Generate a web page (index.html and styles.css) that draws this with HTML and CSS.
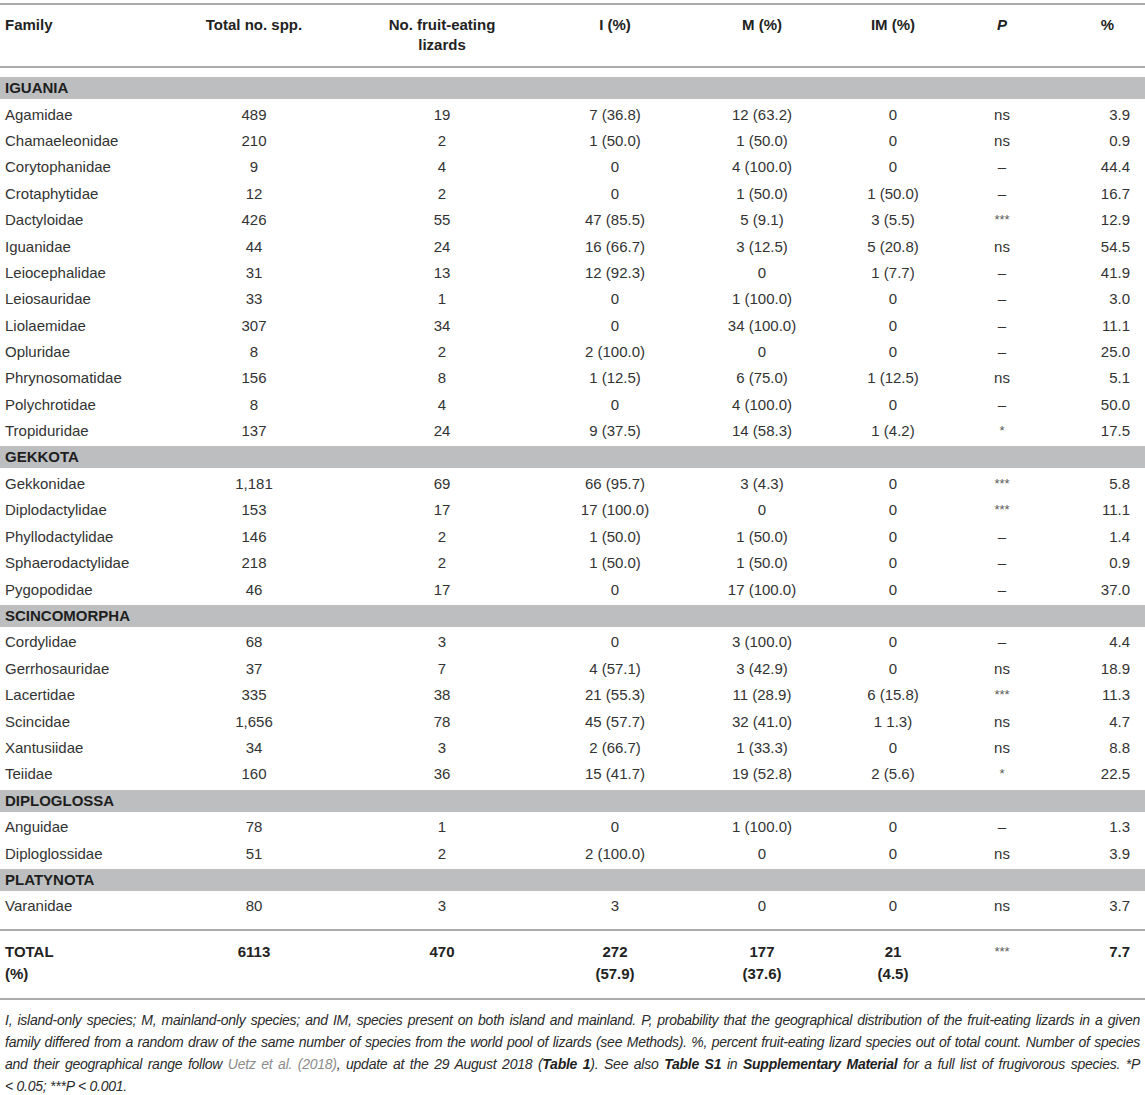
FILE: index.html
```html
<!DOCTYPE html>
<html lang="en">
<head>
<meta charset="utf-8">
<title>Fruit-eating lizards by family</title>
<link rel="stylesheet" href="styles.css">
</head>
<body>
<table class="tbl">
  <colgroup>
    <col class="c1"><col class="c2"><col class="c3"><col class="c4"><col class="c5"><col class="c6"><col class="c7"><col class="c8">
  </colgroup>
  <thead>
    <tr>
      <th class="fam">Family</th>
      <th>Total no. spp.</th>
      <th>No. fruit-eating<br>lizards</th>
      <th>I (%)</th>
      <th>M (%)</th>
      <th>IM (%)</th>
      <th><i>P</i></th>
      <th class="pct">%</th>
    </tr>
  </thead>
  <tbody>
    <tr class="band first"><td colspan="8"><div class="fill">IGUANIA</div></td></tr>
    <tr><td class="fam">Agamidae</td><td>489</td><td>19</td><td>7 (36.8)</td><td>12 (63.2)</td><td>0</td><td>ns</td><td class="pct">3.9</td></tr>
    <tr><td class="fam">Chamaeleonidae</td><td>210</td><td>2</td><td>1 (50.0)</td><td>1 (50.0)</td><td>0</td><td>ns</td><td class="pct">0.9</td></tr>
    <tr><td class="fam">Corytophanidae</td><td>9</td><td>4</td><td>0</td><td>4 (100.0)</td><td>0</td><td>–</td><td class="pct">44.4</td></tr>
    <tr><td class="fam">Crotaphytidae</td><td>12</td><td>2</td><td>0</td><td>1 (50.0)</td><td>1 (50.0)</td><td>–</td><td class="pct">16.7</td></tr>
    <tr><td class="fam">Dactyloidae</td><td>426</td><td>55</td><td>47 (85.5)</td><td>5 (9.1)</td><td>3 (5.5)</td><td class="ast">***</td><td class="pct">12.9</td></tr>
    <tr><td class="fam">Iguanidae</td><td>44</td><td>24</td><td>16 (66.7)</td><td>3 (12.5)</td><td>5 (20.8)</td><td>ns</td><td class="pct">54.5</td></tr>
    <tr><td class="fam">Leiocephalidae</td><td>31</td><td>13</td><td>12 (92.3)</td><td>0</td><td>1 (7.7)</td><td>–</td><td class="pct">41.9</td></tr>
    <tr><td class="fam">Leiosauridae</td><td>33</td><td>1</td><td>0</td><td>1 (100.0)</td><td>0</td><td>–</td><td class="pct">3.0</td></tr>
    <tr><td class="fam">Liolaemidae</td><td>307</td><td>34</td><td>0</td><td>34 (100.0)</td><td>0</td><td>–</td><td class="pct">11.1</td></tr>
    <tr><td class="fam">Opluridae</td><td>8</td><td>2</td><td>2 (100.0)</td><td>0</td><td>0</td><td>–</td><td class="pct">25.0</td></tr>
    <tr><td class="fam">Phrynosomatidae</td><td>156</td><td>8</td><td>1 (12.5)</td><td>6 (75.0)</td><td>1 (12.5)</td><td>ns</td><td class="pct">5.1</td></tr>
    <tr><td class="fam">Polychrotidae</td><td>8</td><td>4</td><td>0</td><td>4 (100.0)</td><td>0</td><td>–</td><td class="pct">50.0</td></tr>
    <tr><td class="fam">Tropiduridae</td><td>137</td><td>24</td><td>9 (37.5)</td><td>14 (58.3)</td><td>1 (4.2)</td><td class="ast">*</td><td class="pct">17.5</td></tr>
    <tr class="band"><td colspan="8"><div class="fill">GEKKOTA</div></td></tr>
    <tr><td class="fam">Gekkonidae</td><td>1,181</td><td>69</td><td>66 (95.7)</td><td>3 (4.3)</td><td>0</td><td class="ast">***</td><td class="pct">5.8</td></tr>
    <tr><td class="fam">Diplodactylidae</td><td>153</td><td>17</td><td>17 (100.0)</td><td>0</td><td>0</td><td class="ast">***</td><td class="pct">11.1</td></tr>
    <tr><td class="fam">Phyllodactylidae</td><td>146</td><td>2</td><td>1 (50.0)</td><td>1 (50.0)</td><td>0</td><td>–</td><td class="pct">1.4</td></tr>
    <tr><td class="fam">Sphaerodactylidae</td><td>218</td><td>2</td><td>1 (50.0)</td><td>1 (50.0)</td><td>0</td><td>–</td><td class="pct">0.9</td></tr>
    <tr><td class="fam">Pygopodidae</td><td>46</td><td>17</td><td>0</td><td>17 (100.0)</td><td>0</td><td>–</td><td class="pct">37.0</td></tr>
    <tr class="band"><td colspan="8"><div class="fill">SCINCOMORPHA</div></td></tr>
    <tr><td class="fam">Cordylidae</td><td>68</td><td>3</td><td>0</td><td>3 (100.0)</td><td>0</td><td>–</td><td class="pct">4.4</td></tr>
    <tr><td class="fam">Gerrhosauridae</td><td>37</td><td>7</td><td>4 (57.1)</td><td>3 (42.9)</td><td>0</td><td>ns</td><td class="pct">18.9</td></tr>
    <tr><td class="fam">Lacertidae</td><td>335</td><td>38</td><td>21 (55.3)</td><td>11 (28.9)</td><td>6 (15.8)</td><td class="ast">***</td><td class="pct">11.3</td></tr>
    <tr><td class="fam">Scincidae</td><td>1,656</td><td>78</td><td>45 (57.7)</td><td>32 (41.0)</td><td>1 1.3)</td><td>ns</td><td class="pct">4.7</td></tr>
    <tr><td class="fam">Xantusiidae</td><td>34</td><td>3</td><td>2 (66.7)</td><td>1 (33.3)</td><td>0</td><td>ns</td><td class="pct">8.8</td></tr>
    <tr><td class="fam">Teiidae</td><td>160</td><td>36</td><td>15 (41.7)</td><td>19 (52.8)</td><td>2 (5.6)</td><td class="ast">*</td><td class="pct">22.5</td></tr>
    <tr class="band"><td colspan="8"><div class="fill">DIPLOGLOSSA</div></td></tr>
    <tr><td class="fam">Anguidae</td><td>78</td><td>1</td><td>0</td><td>1 (100.0)</td><td>0</td><td>–</td><td class="pct">1.3</td></tr>
    <tr><td class="fam">Diploglossidae</td><td>51</td><td>2</td><td>2 (100.0)</td><td>0</td><td>0</td><td>ns</td><td class="pct">3.9</td></tr>
    <tr class="band"><td colspan="8"><div class="fill">PLATYNOTA</div></td></tr>
    <tr><td class="fam">Varanidae</td><td>80</td><td>3</td><td>3</td><td>0</td><td>0</td><td>ns</td><td class="pct">3.7</td></tr>
    <tr class="gap"><td colspan="8"></td></tr>
    <tr class="tot1"><td class="fam">TOTAL</td><td>6113</td><td>470</td><td>272</td><td>177</td><td>21</td><td class="ast">***</td><td class="pct">7.7</td></tr>
    <tr class="tot2"><td class="fam">(%)</td><td></td><td></td><td>(57.9)</td><td>(37.6)</td><td>(4.5)</td><td></td><td class="pct"></td></tr>
  </tbody>
</table>
<p class="note">
<span class="ln">I, island-only species; M, mainland-only species; and IM, species present on both island and mainland. P, probability that the geographical distribution of the fruit-eating lizards in a given</span>
<span class="ln">family differed from a random draw of the same number of species from the world pool of lizards (see Methods). %, percent fruit-eating lizard species out of total count. Number of species</span>
<span class="ln">and their geographical range follow <a class="ref" href="#">Uetz et al. (2018)</a>, update at the 29 August 2018 (<b>Table 1</b>). See also <b>Table S1</b> in <b>Supplementary Material</b> for a full list of frugivorous species. *P</span>
<span class="ln last">&lt; 0.05; ***P &lt; 0.001.</span>
</p>
</body>
</html>
```
FILE: styles.css
```css
* { box-sizing: border-box; }

body {
  margin: 0;
  background: #ffffff;
  font-family: "Liberation Sans", Arial, sans-serif;
  color: #333333;
}

.tbl {
  width: 1145px;
  table-layout: fixed;
  border-collapse: separate;
  border-spacing: 0;
  margin-top: 3px;
  font-size: 15px;
}

.c1 { width: 160px; }
.c2 { width: 188px; }
.c3 { width: 188px; }
.c4 { width: 158px; }
.c5 { width: 136px; }
.c6 { width: 126px; }
.c7 { width: 92px; }
.c8 { width: 97px; }

.tbl th {
  font-weight: bold;
  color: #222222;
  text-align: center;
  vertical-align: top;
  line-height: 20px;
  padding: 10px 0 11px;
  border-top: 2px solid #ababab;
  border-bottom: 2px solid #ababab;
}

.tbl th.fam { text-align: left; padding-left: 5px; }
.tbl th.pct { text-align: right; padding-right: 31px; }

.tbl td {
  height: 26.4px;
  padding: 0;
  line-height: 20px;
  text-align: center;
  vertical-align: middle;
  white-space: nowrap;
}

.tbl td.fam { text-align: left; padding-left: 5px; }
.tbl td.pct { text-align: right; padding-right: 15px; }
.tbl td.ast { font-size: 13px; color: #5a5a5a; font-weight: normal; }

.band td {
  height: auto;
  padding: 2px 0 2.4px;
}
.band.first td { padding-top: 9px; }

.band .fill {
  height: 22px;
  line-height: 22px;
  background: #bcbec0;
  padding-left: 5px;
  font-weight: bold;
  color: #1e1e1e;
  text-align: left;
}

.gap td { height: 9px; }

.tot1 td {
  height: auto;
  font-weight: bold;
  color: #222222;
  line-height: 22px;
  padding-top: 10px;
  border-top: 2px solid #ababab;
}

.tot2 td {
  height: auto;
  font-weight: bold;
  color: #222222;
  line-height: 22px;
  padding-bottom: 13px;
  border-bottom: 2px solid #ababab;
}

.note {
  margin: 0;
  padding: 9px 5px 0 5px;
  font-style: italic;
  font-size: 14px;
  line-height: 22px;
  color: #2a2a2a;
}

.note .ln {
  display: block;
  letter-spacing: -0.25px;
  text-align: justify;
  text-align-last: justify;
}

.note .ln.last {
  text-align: left;
  text-align-last: left;
}

.note b { font-weight: bold; color: #1e1e1e; }

.note .ref {
  color: #8c8c8c;
  text-decoration: none;
}
```
